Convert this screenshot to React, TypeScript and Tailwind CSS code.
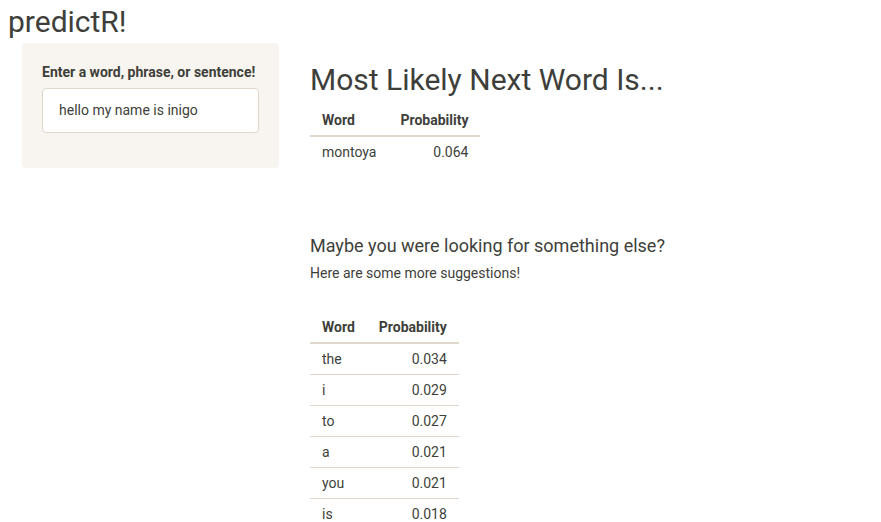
import React from "react";

const mainRows = [{ word: "montoya", prob: "0.064" }];

const moreRows = [
  { word: "the", prob: "0.034" },
  { word: "i", prob: "0.029" },
  { word: "to", prob: "0.027" },
  { word: "a", prob: "0.021" },
  { word: "you", prob: "0.021" },
  { word: "is", prob: "0.018" },
];

function WordTable({ rows }: { rows: { word: string; prob: string }[] }) {
  return (
    <table className="self-start border-collapse text-[14px] leading-[20px]">
      <thead>
        <tr className="border-b-2 border-[#dfd7ca]">
          <th className="px-3 pt-2 pb-[5px] text-left font-bold">Word</th>
          <th className="px-3 pt-2 pb-[5px] text-right font-bold">Probability</th>
        </tr>
      </thead>
      <tbody>
        {rows.map((r, i) => (
          <tr key={i} className={i > 0 ? "border-t border-[#dfd7ca]" : ""}>
            <td className="px-3 py-[5px] text-left">{r.word}</td>
            <td className="px-3 py-[5px] text-right">{r.prob}</td>
          </tr>
        ))}
      </tbody>
    </table>
  );
}

export default function App() {
  return (
    <div className="min-h-[522px] bg-white font-['Roboto',sans-serif] text-[#3e3f3a] overflow-hidden">
      <h2 className="pl-[8px] pt-[5px] text-[30px] leading-[33px] font-normal">predictR!</h2>
      <div className="mt-[5px] flex items-start">
        <div className="ml-[22px] w-[257px] rounded bg-[#f8f5f0] px-5 pt-[19px] pb-[20px]">
          <label className="block text-[14px] leading-[20px] font-bold mb-[6px]">
            Enter a word, phrase, or sentence!
          </label>
          <div className="h-[45px] w-full rounded border border-[#dfd7ca] bg-white pl-4 flex items-center text-[14px] mb-[15px]">
            hello my name is inigo
          </div>
        </div>
        <div className="ml-[31px] flex flex-col">
          <h3 className="mt-[20px] mb-[6px] text-[30px] leading-[33px] font-normal">
            Most Likely Next Word Is...
          </h3>
          <WordTable rows={mainRows} />
          <h4 className="mt-[68px] text-[18px] leading-[22px] font-normal">
            Maybe you were looking for something else?
          </h4>
          <p className="mt-[6px] text-[14px] leading-[20px]">Here are some more suggestions!</p>
          <div className="mt-[26px] flex">
            <WordTable rows={moreRows} />
          </div>
        </div>
      </div>
    </div>
  );
}
